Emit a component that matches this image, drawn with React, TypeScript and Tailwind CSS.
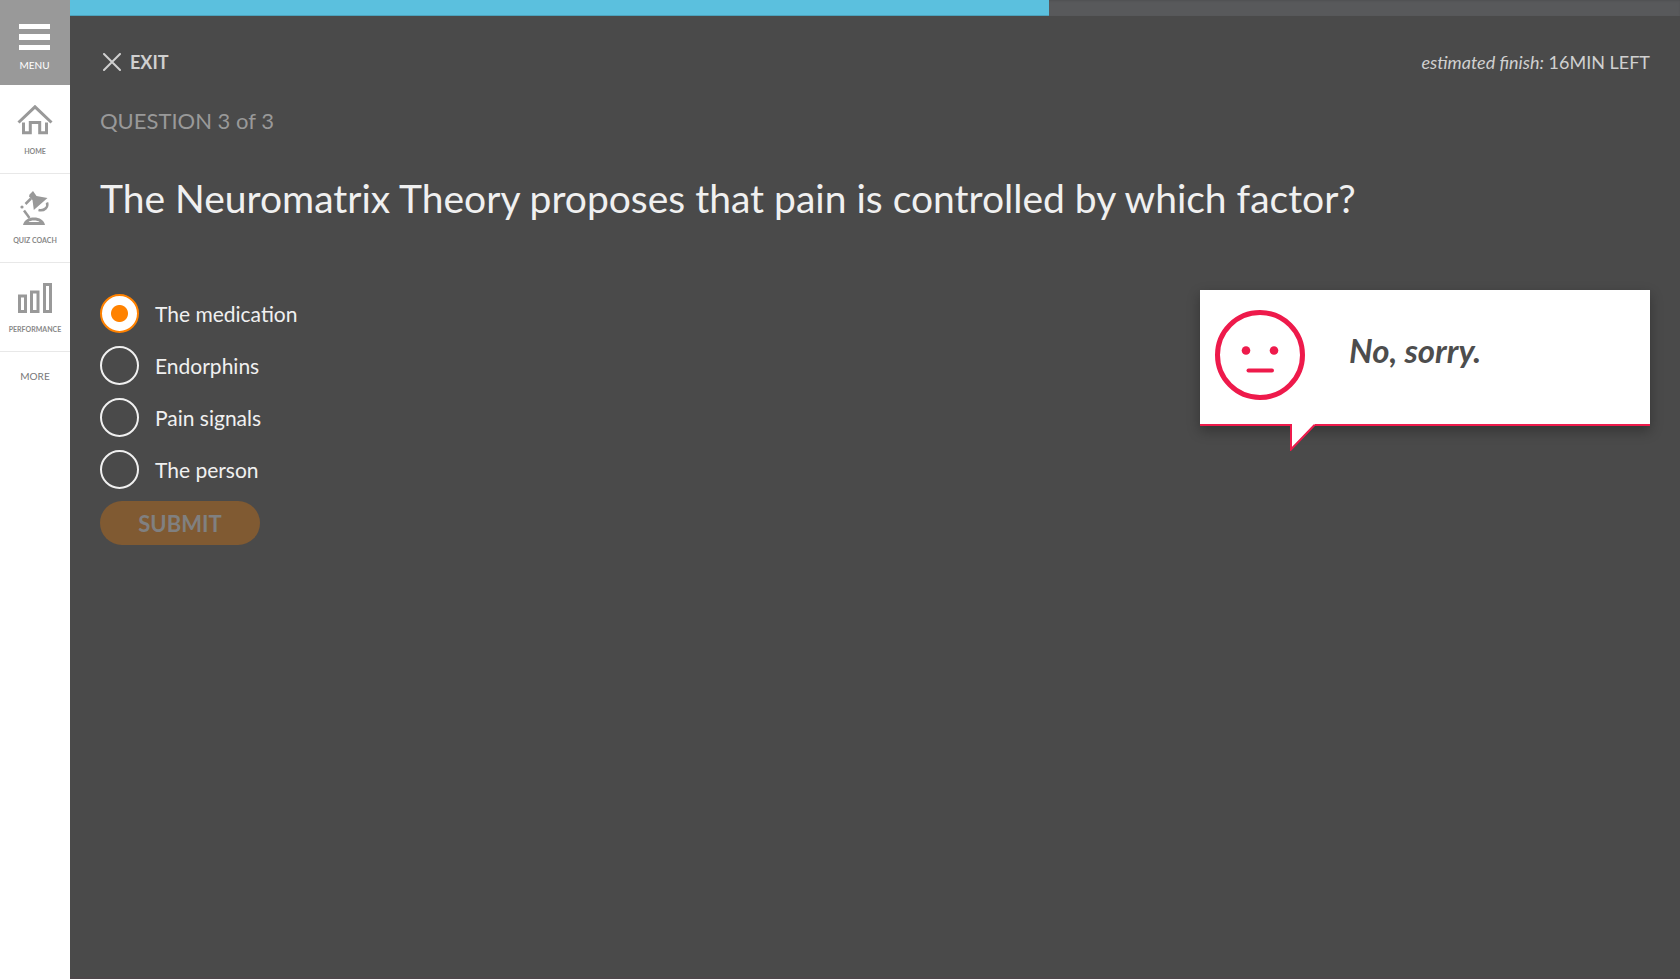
import { useState, type ReactNode } from "react";

const options = ["The medication", "Endorphins", "Pain signals", "The person"];

function HomeIcon() {
  return (
    <svg width="36" height="32" viewBox="0 0 36 32" fill="none" stroke="#999" strokeWidth="3" aria-hidden="true">
      <path d="M1.500 17.500 18 1.800l16.500 15.700" />
      <path d="M6.500 17.500v10.200h6.800v-10.200h9.400v10.200h6.800v-10.200" />
    </svg>
  );
}

function LampIcon() {
  return (
    <svg width="30" height="36" viewBox="0 0 30 36" fill="none" aria-hidden="true">
      <path d="M9.500 4.500 13 1l3.500 5 11 2L13.800 20 12.500 10 9 6.500z" fill="#999" />
      <path d="M11 8.500 5.500 14" stroke="#999" strokeWidth="2.500" />
      <circle cx="2" cy="17" r="1.600" fill="#999" />
      <path d="M4 20.500 9.500 28" stroke="#999" strokeWidth="2.500" />
      <path d="M27 12.500c1.500 4.500-2.500 9-8.500 7.500" stroke="#999" strokeWidth="2.500" />
      <path d="M3 35c1-5 5.500-7.500 11-7.500s10 2.500 11 7.500z" fill="#999" />
      <path d="M8.500 32c2-2 9-2 11 0z" fill="#fff" />
    </svg>
  );
}

function BarsIcon() {
  return (
    <svg width="36" height="32" viewBox="0 0 36 32" fill="none" stroke="#999" strokeWidth="3" aria-hidden="true">
      <path d="M2.500 13h6v15.500h-6zM14.500 9h6.500v19.500h-6.500zM27.500 1.500h6v27h-6z" />
    </svg>
  );
}

function NavItem({ label, children }: { label: string; children: ReactNode }) {
  return (
    <a href="#" className="flex h-[89px] flex-col items-center border-b border-[#e8e8e8] text-[#888]">
      <span className="flex h-[60px] items-end pb-2">{children}</span>
      <span className="text-[7px] leading-3 font-bold">{label}</span>
    </a>
  );
}

function Feedback() {
  return (
    <aside className="relative flex h-[136px] w-[450px] shrink-0 border-b-2 border-[#ee1a4b] bg-white pt-5 pl-[15px] shadow-[0_5px_12px_rgba(0,0,0,0.3)]">
      <svg width="90" height="90" viewBox="0 0 90 90" fill="none" aria-hidden="true">
        <circle cx="45" cy="45" r="42.500" stroke="#ee1a4b" strokeWidth="5" />
        <circle cx="31" cy="40.500" r="4.300" fill="#ee1a4b" />
        <circle cx="59" cy="40.500" r="4.300" fill="#ee1a4b" />
        <path d="M33.500 60.500h23.500" stroke="#ee1a4b" strokeWidth="4" strokeLinecap="round" />
      </svg>
      <p className="pt-5 pl-11 text-[33px] leading-10 font-bold text-[#4d4d4d] italic">No, sorry.</p>
      <svg className="absolute top-[133px] left-[90px]" width="26" height="28" viewBox="0 0 26 28" aria-hidden="true">
        <path d="M1 0v25.500L24.500 2V0z" fill="#fff" />
        <path d="M1 1v25.500L24.500 2" fill="none" stroke="#ee1a4b" strokeWidth="2" />
      </svg>
    </aside>
  );
}

export default function App() {
  const [answer, setAnswer] = useState(options[0]);
  return (
    <div className="flex min-h-screen bg-[#4a4a4a] font-['Lato',sans-serif]">
      <nav className="w-[70px] shrink-0 bg-white">
        <button type="button" className="flex h-[85px] w-full flex-col items-center bg-[#999] pt-6 pr-px text-white">
          <span className="flex w-[31px] flex-col gap-[5px]">
            <span className="h-[5px] bg-white" />
            <span className="h-[6px] bg-white" />
            <span className="h-[5px] bg-white" />
          </span>
          <span className="pt-[7px] text-[10px] leading-4">MENU</span>
        </button>
        <NavItem label="HOME"><HomeIcon /></NavItem>
        <NavItem label="QUIZ COACH"><LampIcon /></NavItem>
        <NavItem label="PERFORMANCE"><BarsIcon /></NavItem>
        <a href="#" className="block pt-4 text-center text-[10px] leading-4 text-[#777]">MORE</a>
      </nav>

      <main className="min-w-0 flex-1 border-b-2 border-[#4d474a]">
        <div className="h-4 bg-[#58595b] shadow-[inset_0_1px_2px_rgba(0,0,0,0.1)]">
          <div className="h-full w-[60.8%] bg-[#5bc0de] shadow-[inset_0_-1px_0_rgba(0,0,0,0.15)]" />
        </div>

        <div className="px-[30px]">
          <header className="flex items-center justify-between pt-8 text-[#d0d0d0]">
            <button type="button" className="flex items-center gap-[9px] pl-[3px] text-[18px] leading-7 font-bold">
              <svg width="18" height="18" viewBox="0 0 18 18" stroke="#d0d0d0" strokeWidth="2" strokeLinecap="round" aria-hidden="true">
                <path d="m1 1 16 16M17 1 1 17" />
              </svg>
              EXIT
            </button>
            <p className="text-[18px] leading-7"><em>estimated finish:</em> 16MIN LEFT</p>
          </header>

          <p className="pt-7 text-[22px] leading-[34px] text-[#999]">QUESTION 3 of 3</p>
          <h1 className="pt-9 text-[39px] leading-12 text-[#f0f0f0]">
            The Neuromatrix Theory proposes that pain is controlled by which factor?
          </h1>

          <div className="flex items-start justify-between pt-[68px]">
            <form className="pt-1" onSubmit={(e) => e.preventDefault()}>
              <div className="flex flex-col gap-[13px]">
                {options.map((option) => (
                  <label key={option} className="flex items-center gap-4 text-[21px] leading-[39px] text-[#f0f0f0]">
                    <input
                      type="radio"
                      name="answer"
                      value={option}
                      checked={answer === option}
                      onChange={() => setAnswer(option)}
                      className="size-[39px] appearance-none rounded-full border-2 border-[#f0f0f0] checked:border-[#ff8200] checked:bg-[radial-gradient(circle,#ff8200_8px,#fff_9px)]"
                    />
                    {option}
                  </label>
                ))}
              </div>
              <button type="submit" disabled className="mt-3 h-11 w-40 rounded-full bg-[#805a32] text-[22px] font-bold text-[#808080]">
                SUBMIT
              </button>
            </form>
            <Feedback />
          </div>
        </div>
      </main>
    </div>
  );
}
